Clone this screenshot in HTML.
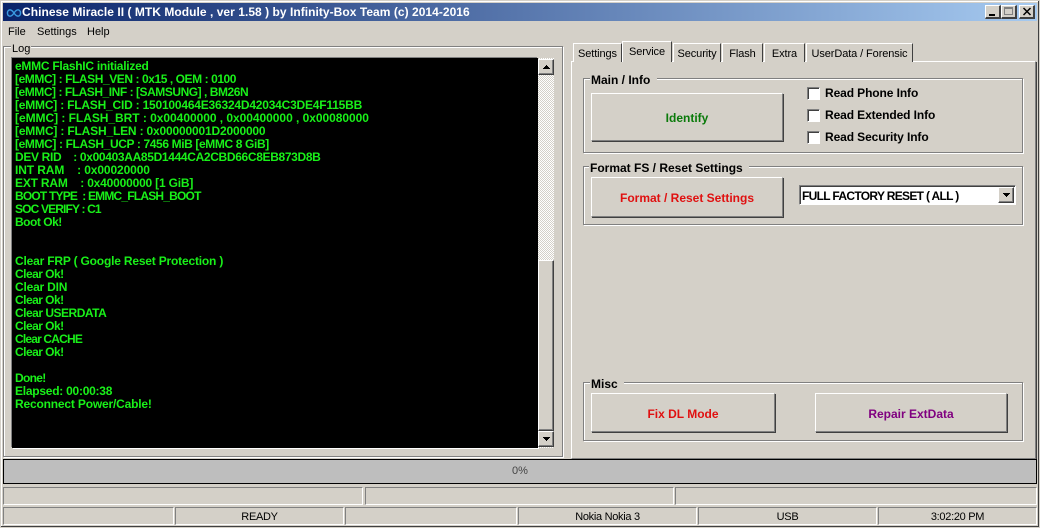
<!DOCTYPE html>
<html><head><meta charset="utf-8"><style>
html,body{margin:0;padding:0}
body{width:1040px;height:528px;overflow:hidden;position:relative;background:#d4d0c8;font-family:"Liberation Sans",sans-serif;font-size:11px;color:#000}
div,span{position:absolute;box-sizing:border-box;white-space:pre}
.raised{background:#d4d0c8;border-top:1px solid #fff;border-left:1px solid #fff;border-right:2px solid #404040;border-bottom:2px solid #404040}
.btn{background:#d4d0c8;border:1px solid;border-color:#fff #808080 #808080 #fff;box-shadow:1px 1px 0 #404040;font-weight:bold;text-align:center;font-size:12px}
.group{border:1px solid #808080;box-shadow:1px 1px 0 #fff,inset 1px 1px 0 #fff}
.leg{background:#d4d0c8;font-weight:bold;padding:0 3px 0 1px;height:13px;line-height:13px;font-size:12px}
.sunk{border:1px solid;border-color:#808080 #fff #fff #808080;text-align:center;line-height:18px;font-size:11px;letter-spacing:-.3px}
.tab{height:19px;top:43px;background:#d4d0c8;border-top:1px solid #fff;border-left:1px solid #fff;border-right:1px solid #404040;text-align:center;line-height:20px;font-size:11px;letter-spacing:-.1px}
.cb{width:13px;height:13px;left:807px;background:#fff;border:1px solid;border-color:#808080 #fff #fff #808080;box-shadow:inset 1px 1px 0 #404040}
.cl{left:825px;font-weight:bold;font-size:12px;letter-spacing:-.1px;line-height:13px}
#log div{left:15px;line-height:13px;height:13px;color:#19f019;font-weight:bold;font-size:12px}
.sb{background:#d4d0c8;border:1px solid;border-color:#fff #404040 #404040 #fff;box-shadow:inset -1px -1px 0 #808080}
</style></head><body>
<div style="left:0;top:0;width:1040px;height:528px;border:1px solid #d4d0c8;box-shadow:inset -1px -1px 0 #404040,inset 1px 1px 0 #fff"></div>
<div style="left:3px;top:3px;width:1034px;height:18px;background:linear-gradient(90deg,#0a246a,#a6caf0)"></div>
<svg style="position:absolute;left:6px;top:7px" width="16" height="12" viewBox="0 0 16 12"><path d="M8 6C6 3 4 2.500 2.800 3.200 1 4.200 1 7.800 2.800 8.800 4.500 9.800 6 9 8 6c2-3 3.500-3.800 5.200-2.800 1.800 1 1.800 4.600 0 5.600C12 9.500 10 9 8 6z" fill="none" stroke="#3a9ae0" stroke-width="1.4"/></svg>
<div style="left:22px;top:4px;height:16px;line-height:17px;color:#fff;font-weight:bold;font-size:12px;letter-spacing:.04px">Chinese Miracle II ( MTK Module , ver 1.58 ) by Infinity-Box Team (c) 2014-2016</div>
<div class="raised" style="left:985px;top:5px;width:16px;height:14px"><span style="left:3px;top:8px;width:6px;height:2px;background:#000"></span></div>
<div class="raised" style="left:1001px;top:5px;width:16px;height:14px"><span style="left:2px;top:1px;width:9px;height:8px;border:1px solid #808080;border-top-width:2px"></span></div>
<div class="raised" style="left:1019px;top:5px;width:16px;height:14px"><svg style="position:absolute;left:2px;top:1px" width="10" height="9"><path d="M1.500 1l7 7M8.500 1l-7 7" stroke="#000" stroke-width="1.500" fill="none"/></svg></div>

<div style="left:8px;top:25px;line-height:14px">File</div>
<div style="left:37px;top:25px;line-height:14px">Settings</div>
<div style="left:87px;top:25px;line-height:14px">Help</div>

<div class="group" style="left:3px;top:46px;width:560px;height:411px"></div>
<div style="left:11px;top:42px;background:#d4d0c8;padding:0 1px;line-height:14px">Log</div>
<div style="left:12px;top:58px;width:526px;height:390px;background:#000;box-shadow:-1px -1px 0 #808080,1px 1px 0 #fff"></div>
<div id="log">
<div style="top:60px;letter-spacing:-.27px">eMMC FlashIC initialized</div>
<div style="top:73px;letter-spacing:-.43px">[eMMC] : FLASH_VEN : 0x15 , OEM : 0100</div>
<div style="top:86px;letter-spacing:-.46px">[eMMC] : FLASH_INF : [SAMSUNG] , BM26N</div>
<div style="top:99px;letter-spacing:-.21px">[eMMC] : FLASH_CID : 150100464E36324D42034C3DE4F115BB</div>
<div style="top:112px;letter-spacing:-.04px">[eMMC] : FLASH_BRT : 0x00400000 , 0x00400000 , 0x00080000</div>
<div style="top:125px;letter-spacing:-.18px">[eMMC] : FLASH_LEN : 0x00000001D2000000</div>
<div style="top:138px;letter-spacing:-.38px">[eMMC] : FLASH_UCP : 7456 MiB [eMMC 8 GiB]</div>
<div style="top:151px;letter-spacing:-.34px">DEV RID    : 0x00403AA85D1444CA2CBD66C8EB873D8B</div>
<div style="top:164px;letter-spacing:-.11px">INT RAM    : 0x00020000</div>
<div style="top:177px;letter-spacing:-.19px">EXT RAM    : 0x40000000 [1 GiB]</div>
<div style="top:190px;letter-spacing:-.8px">BOOT TYPE  : EMMC_FLASH_BOOT</div>
<div style="top:203px;letter-spacing:-.85px">SOC VERIFY : C1</div>
<div style="top:216px;letter-spacing:-.48px">Boot Ok!</div>
<div style="top:255px;letter-spacing:-.19px">Clear FRP ( Google Reset Protection )</div>
<div style="top:268px;letter-spacing:-.53px">Clear Ok!</div>
<div style="top:281px;letter-spacing:-.2px">Clear DIN</div>
<div style="top:294px;letter-spacing:-.53px">Clear Ok!</div>
<div style="top:307px;letter-spacing:-.5px">Clear USERDATA</div>
<div style="top:320px;letter-spacing:-.53px">Clear Ok!</div>
<div style="top:333px;letter-spacing:-.82px">Clear CACHE</div>
<div style="top:346px;letter-spacing:-.53px">Clear Ok!</div>
<div style="top:372px;letter-spacing:-.68px">Done!</div>
<div style="top:385px;letter-spacing:-.25px">Elapsed: 00:00:38</div>
<div style="top:398px;letter-spacing:-.18px">Reconnect Power/Cable!</div>
</div>
<div style="left:538px;top:58px;width:16px;height:390px;background:repeating-conic-gradient(#fff 0 25%,#d4d0c8 0 50%) 0 0/2px 2px"></div>
<div class="sb" style="left:538px;top:59px;width:16px;height:16px"><svg style="position:absolute;left:3px;top:4px" width="9" height="6"><path d="M4 1h1v1h1v1h1v1h1v1H1V4h1V3h1V2h1z"/></svg></div>
<div class="sb" style="left:538px;top:260px;width:16px;height:171px"></div>
<div class="sb" style="left:538px;top:431px;width:16px;height:16px"><svg style="position:absolute;left:3px;top:5px" width="9" height="6"><path d="M1 0h7v1H7v1H6v1H5v1H4V3H3V2H2V1H1z"/></svg></div>

<div style="left:571px;top:61px;width:465px;height:398px;border:1px solid;border-color:#fff #808080 #808080 #fff;box-shadow:1px 1px 0 #404040"></div>
<div class="tab" style="left:573px;width:49px">Settings</div>
<div class="tab" style="left:673px;width:48px">Security</div>
<div class="tab" style="left:722px;width:41px">Flash</div>
<div class="tab" style="left:764px;width:41px">Extra</div>
<div class="tab" style="left:806px;width:107px">UserData / Forensic</div>
<div class="tab" style="left:622px;top:41px;width:50px;height:21px;line-height:20px;z-index:2">Service</div>

<div class="group" style="left:583px;top:78px;width:440px;height:75px"></div>
<div class="leg" style="left:590px;top:74px">Main / Info </div>
<div class="btn" style="left:591px;top:93px;width:192px;height:48px;line-height:48px;color:#0a7a0a">Identify</div>
<div class="cb" style="top:87px"></div><div class="cl" style="top:87px">Read Phone Info</div>
<div class="cb" style="top:109px"></div><div class="cl" style="top:109px">Read Extended Info</div>
<div class="cb" style="top:131px"></div><div class="cl" style="top:131px">Read Security Info</div>

<div class="group" style="left:583px;top:166px;width:440px;height:59px"></div>
<div class="leg" style="left:589px;top:162px">Format FS / Reset Settings </div>
<div class="btn" style="left:591px;top:177px;width:192px;height:40px;line-height:41px;color:#e01010">Format / Reset Settings</div>
<div style="left:799px;top:185px;width:217px;height:20px;background:#fff;border:1px solid;border-color:#808080 #fff #fff #808080;box-shadow:inset 1px 1px 0 #404040"></div>
<div style="left:802px;top:190px;font-weight:bold;font-size:12px;line-height:13px;letter-spacing:-.68px">FULL FACTORY RESET ( ALL )</div>
<div class="sb" style="left:998px;top:187px;width:16px;height:16px"><svg style="position:absolute;left:3px;top:5px" width="9" height="6"><path d="M1 0h7v1H7v1H6v1H5v1H4V3H3V2H2V1H1z"/></svg></div>

<div class="group" style="left:583px;top:382px;width:440px;height:59px"></div>
<div class="leg" style="left:590px;top:378px">Misc </div>
<div class="btn" style="left:591px;top:393px;width:184px;height:39px;line-height:40px;color:#e01010">Fix DL Mode</div>
<div class="btn" style="left:815px;top:393px;width:192px;height:39px;line-height:40px;color:#800080">Repair ExtData</div>

<div style="left:3px;top:459px;width:1034px;height:25px;background:#bebebe;border:1px solid #000;text-align:center;line-height:22px;color:#444">0%</div>

<div class="sunk" style="left:3px;top:487px;width:360px;height:18px"></div>
<div class="sunk" style="left:365px;top:487px;width:309px;height:18px"></div>
<div class="sunk" style="left:675px;top:487px;width:362px;height:18px"></div>
<div class="sunk" style="left:3px;top:507px;width:171px;height:18px"></div>
<div class="sunk" style="left:175px;top:507px;width:169px;height:18px">READY</div>
<div class="sunk" style="left:345px;top:507px;width:172px;height:18px"></div>
<div class="sunk" style="left:518px;top:507px;width:179px;height:18px">Nokia Nokia 3</div>
<div class="sunk" style="left:698px;top:507px;width:179px;height:18px">USB</div>
<div class="sunk" style="left:878px;top:507px;width:159px;height:18px">3:02:20 PM</div>
</body></html>
